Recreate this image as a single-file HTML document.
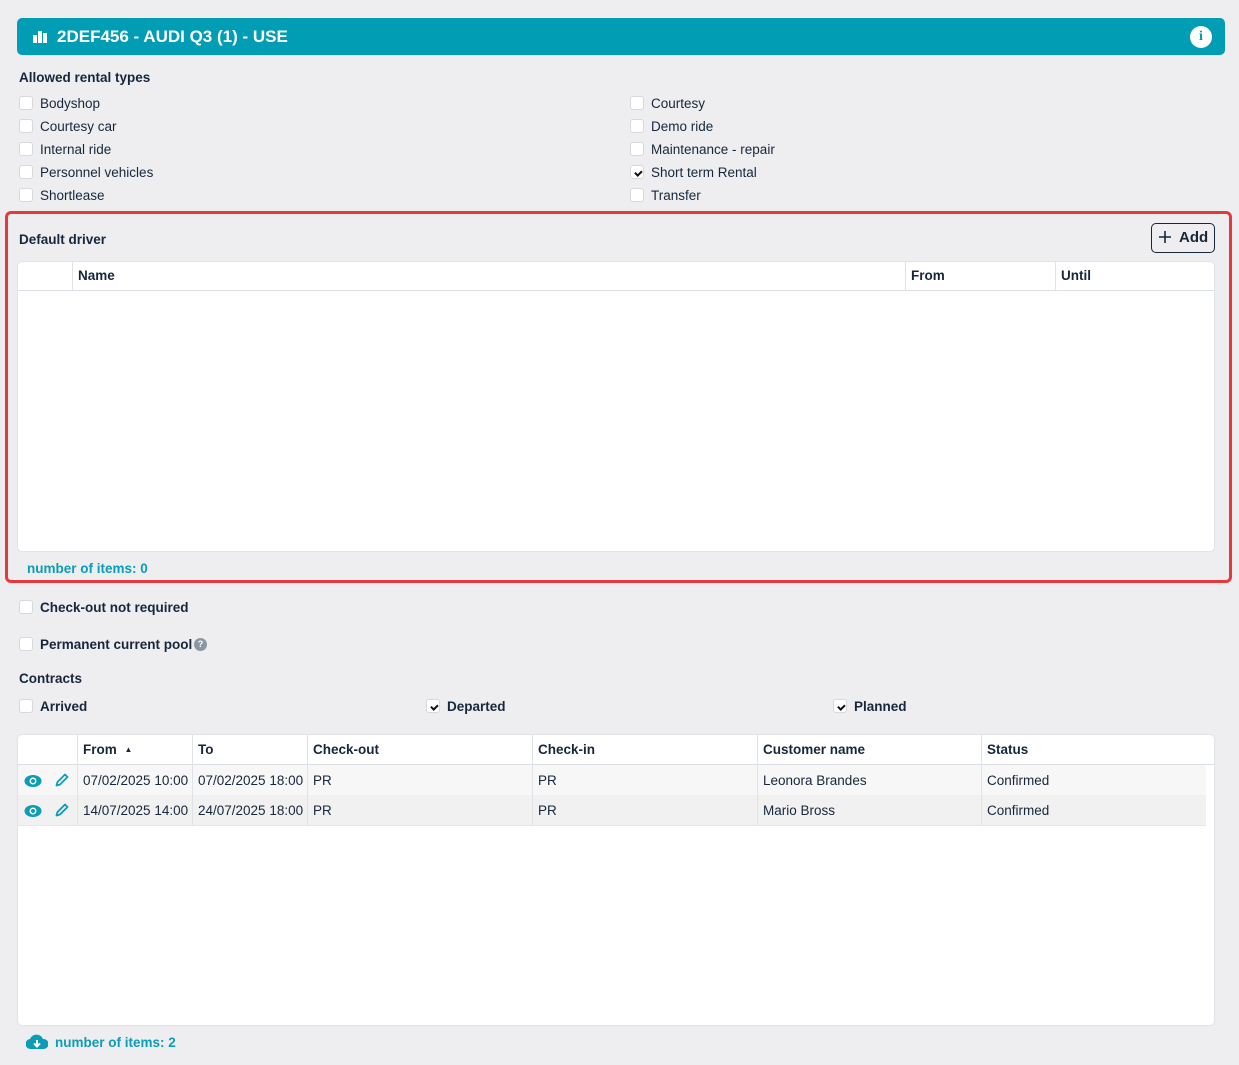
<!DOCTYPE html>
<html><head><meta charset="utf-8"><style>
*{box-sizing:border-box;margin:0;padding:0}
body{width:1239px;height:1065px;background:#eeeef0;font-family:"Liberation Sans",sans-serif;color:#17263a;font-size:13.5px;position:relative;overflow:hidden}
.a{position:absolute;white-space:nowrap}
.cb{position:absolute;width:14px;height:14px;background:#fff;border:1px solid #d6d8dc;border-radius:3px}
.cb.on::after{content:"";position:absolute;left:4.5px;top:3px;width:2.5px;height:5px;border:solid #111;border-width:0 2px 2px 0;transform:rotate(45deg)}
.b{font-weight:bold}
.t{color:#0a9db6;font-weight:bold}
.panel{position:absolute;background:#fff;border:1px solid #dfe2e6;border-radius:5px}
.vl{position:absolute;width:1px;background:#dfe2e6}
.hl{position:absolute;height:1px;background:#dadde1}
</style></head><body>
<div class="a" style="left:17px;top:18px;width:1208px;height:37px;background:#009db5;border-radius:5px"></div>
<svg class="a" style="left:33px;top:29px" width="15" height="14"><rect x="0" y="6" width="4" height="8" fill="#fff"/><rect x="5" y="2" width="4" height="12" fill="#fff"/><rect x="10" y="4" width="4" height="10" fill="#fff"/></svg>
<div class="a b" style="left:57px;top:27px;color:#fff;font-size:17px">2DEF456 - AUDI Q3 (1) - USE</div>
<div class="a" style="left:1190px;top:26px;width:22px;height:22px;border-radius:50%;background:#fff;color:#009db5;text-align:center;font-weight:bold;font-size:14px;line-height:22px;font-family:'Liberation Serif',serif">i</div>

<div class="a b" style="left:19px;top:70px">Allowed rental types</div>
<div class="cb" style="left:19px;top:96px"></div><div class="a" style="left:40px;top:96px">Bodyshop</div>
<div class="cb" style="left:19px;top:119px"></div><div class="a" style="left:40px;top:119px">Courtesy car</div>
<div class="cb" style="left:19px;top:142px"></div><div class="a" style="left:40px;top:142px">Internal ride</div>
<div class="cb" style="left:19px;top:165px"></div><div class="a" style="left:40px;top:165px">Personnel vehicles</div>
<div class="cb" style="left:19px;top:188px"></div><div class="a" style="left:40px;top:188px">Shortlease</div>
<div class="cb" style="left:630px;top:96px"></div><div class="a" style="left:651px;top:96px">Courtesy</div>
<div class="cb" style="left:630px;top:119px"></div><div class="a" style="left:651px;top:119px">Demo ride</div>
<div class="cb" style="left:630px;top:142px"></div><div class="a" style="left:651px;top:142px">Maintenance - repair</div>
<div class="cb on" style="left:630px;top:165px"></div><div class="a" style="left:651px;top:165px">Short term Rental</div>
<div class="cb" style="left:630px;top:188px"></div><div class="a" style="left:651px;top:188px">Transfer</div>

<div class="a" style="left:5px;top:211px;width:1227px;height:372px;border:3px solid #e5393c;border-radius:6px"></div>
<div class="a b" style="left:19px;top:232px">Default driver</div>
<div class="a" style="left:1151px;top:223px;width:64px;height:30px;border:1px solid #17263a;border-radius:5px"></div>
<svg class="a" style="left:1159px;top:231px" width="12" height="12"><path d="M6 0V12M0 6H12" stroke="#17263a" stroke-width="1.6"/></svg>
<div class="a b" style="left:1179px;top:229px;font-size:15px">Add</div>
<div class="panel" style="left:17px;top:261px;width:1198px;height:291px"></div>
<div class="hl" style="left:18px;top:290px;width:1196px"></div>
<div class="vl" style="left:72px;top:262px;height:28px"></div>
<div class="vl" style="left:905px;top:262px;height:28px"></div>
<div class="vl" style="left:1055px;top:262px;height:28px"></div>
<div class="a b" style="left:78px;top:268px">Name</div>
<div class="a b" style="left:911px;top:268px">From</div>
<div class="a b" style="left:1061px;top:268px">Until</div>
<div class="a t" style="left:27px;top:561px">number of items: 0</div>

<div class="cb" style="left:19px;top:600px"></div><div class="a b" style="left:40px;top:600px">Check-out not required</div>
<div class="cb" style="left:19px;top:637px"></div><div class="a b" style="left:40px;top:637px">Permanent current pool</div>
<div class="a" style="left:194px;top:638px;width:13px;height:13px;border-radius:50%;background:#8a96a3;color:#fff;font-size:9px;font-weight:bold;text-align:center;line-height:13px">?</div>
<div class="a b" style="left:19px;top:671px">Contracts</div>
<div class="cb" style="left:19px;top:699px"></div><div class="a b" style="left:40px;top:699px">Arrived</div>
<div class="cb on" style="left:426px;top:699px"></div><div class="a b" style="left:447px;top:699px">Departed</div>
<div class="cb on" style="left:833px;top:699px"></div><div class="a b" style="left:854px;top:699px">Planned</div>

<div class="panel" style="left:17px;top:734px;width:1198px;height:292px"></div>
<div class="hl" style="left:18px;top:764px;width:1196px"></div>
<div class="a" style="left:18px;top:765px;width:1188px;height:30px;background:#f7f7f7"></div>
<div class="a" style="left:18px;top:795px;width:1188px;height:30px;background:#f1f1f2"></div>
<div class="hl" style="left:18px;top:825px;width:1188px;background:#e4e6e9"></div>
<div class="vl" style="left:77px;top:735px;height:90px"></div>
<div class="vl" style="left:192px;top:735px;height:90px"></div>
<div class="vl" style="left:307px;top:735px;height:90px"></div>
<div class="vl" style="left:532px;top:735px;height:90px"></div>
<div class="vl" style="left:757px;top:735px;height:90px"></div>
<div class="vl" style="left:981px;top:735px;height:90px"></div>
<div class="a b" style="left:83px;top:742px">From <span style="font-size:8px;position:relative;top:-2px;margin-left:4px">▲</span></div>
<div class="a b" style="left:198px;top:742px">To</div>
<div class="a b" style="left:313px;top:742px">Check-out</div>
<div class="a b" style="left:538px;top:742px">Check-in</div>
<div class="a b" style="left:763px;top:742px">Customer name</div>
<div class="a b" style="left:987px;top:742px">Status</div>

<svg class="a" style="left:24px;top:774px" width="18" height="14"><ellipse cx="9" cy="7" rx="8.5" ry="6" fill="#0a9db6"/><circle cx="9" cy="7" r="3.5" fill="#fff"/><circle cx="9" cy="7" r="2" fill="#0a9db6"/></svg>
<svg class="a" style="left:54px;top:772px" width="16" height="16"><path d="M2.5 13.5 L3.5 10 L11 2.5 L13.5 5 L6 12.5 Z" fill="none" stroke="#0a9db6" stroke-width="1.8" stroke-linejoin="round"/></svg>
<svg class="a" style="left:24px;top:804px" width="18" height="14"><ellipse cx="9" cy="7" rx="8.5" ry="6" fill="#0a9db6"/><circle cx="9" cy="7" r="3.5" fill="#fff"/><circle cx="9" cy="7" r="2" fill="#0a9db6"/></svg>
<svg class="a" style="left:54px;top:802px" width="16" height="16"><path d="M2.5 13.5 L3.5 10 L11 2.5 L13.5 5 L6 12.5 Z" fill="none" stroke="#0a9db6" stroke-width="1.8" stroke-linejoin="round"/></svg>

<div class="a" style="left:83px;top:773px">07/02/2025 10:00</div>
<div class="a" style="left:198px;top:773px">07/02/2025 18:00</div>
<div class="a" style="left:313px;top:773px">PR</div>
<div class="a" style="left:538px;top:773px">PR</div>
<div class="a" style="left:763px;top:773px">Leonora Brandes</div>
<div class="a" style="left:987px;top:773px">Confirmed</div>
<div class="a" style="left:83px;top:803px">14/07/2025 14:00</div>
<div class="a" style="left:198px;top:803px">24/07/2025 18:00</div>
<div class="a" style="left:313px;top:803px">PR</div>
<div class="a" style="left:538px;top:803px">PR</div>
<div class="a" style="left:763px;top:803px">Mario Bross</div>
<div class="a" style="left:987px;top:803px">Confirmed</div>

<svg class="a" style="left:26px;top:1034px" width="22" height="16"><path d="M5 15 A5 5 0 0 1 4 5 A7 7 0 0 1 17 5 A5 5 0 0 1 18 15 Z" fill="#0a9db6"/><path d="M11 6 V12 M8 9.5 L11 12.5 L14 9.5" stroke="#fff" stroke-width="2" fill="none"/></svg>
<div class="a t" style="left:55px;top:1035px">number of items: 2</div>
</body></html>
